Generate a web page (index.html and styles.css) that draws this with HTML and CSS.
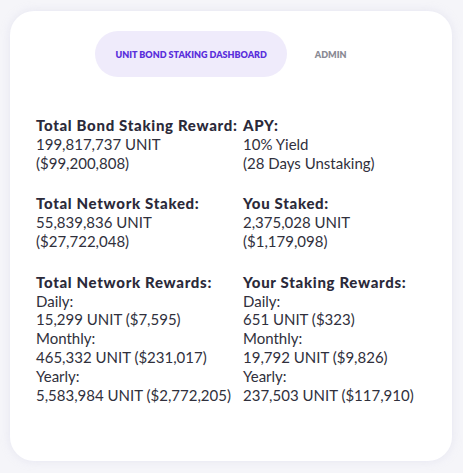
FILE: index.html
```html
<!DOCTYPE html>
<html>
<head>
<meta charset="utf-8">
<link rel="stylesheet" href="styles.css">
</head>
<body>
<div class="card">
  <nav class="tabs">
    <div class="tab tab-active">UNIT BOND STAKING DASHBOARD</div>
    <div class="tab">ADMIN</div>
  </nav>
  <div class="grid">
    <div class="block">
      <div class="label">Total Bond Staking Reward:</div>
      <div>199,817,737 UNIT</div>
      <div>($99,200,808)</div>
    </div>
    <div class="block">
      <div class="label">APY:</div>
      <div>10% Yield</div>
      <div>(28 Days Unstaking)</div>
    </div>
    <div class="block">
      <div class="label">Total Network Staked:</div>
      <div>55,839,836 UNIT</div>
      <div>($27,722,048)</div>
    </div>
    <div class="block">
      <div class="label">You Staked:</div>
      <div>2,375,028 UNIT</div>
      <div>($1,179,098)</div>
    </div>
    <div class="block">
      <div class="label">Total Network Rewards:</div>
      <div>Daily:</div>
      <div>15,299 UNIT ($7,595)</div>
      <div>Monthly:</div>
      <div>465,332 UNIT ($231,017)</div>
      <div>Yearly:</div>
      <div>5,583,984 UNIT ($2,772,205)</div>
    </div>
    <div class="block">
      <div class="label">Your Staking Rewards:</div>
      <div>Daily:</div>
      <div>651 UNIT ($323)</div>
      <div>Monthly:</div>
      <div>19,792 UNIT ($9,826)</div>
      <div>Yearly:</div>
      <div>237,503 UNIT ($117,910)</div>
    </div>
  </div>
</div>
</body>
</html>
```
FILE: styles.css
```css
html, body {
  margin: 0;
  padding: 0;
}
body {
  background: #f5f5f9;
  padding: 11px 11px 12px 10px;
  font-family: "Lato", "Liberation Sans", sans-serif;
  color: #2b2a3a;
  box-sizing: border-box;
  width: 463px;
  height: 473px;
}
.card {
  background: #ffffff;
  border-radius: 24px;
  box-shadow: 0 0 10px rgba(200, 200, 225, 0.35);
  height: 450px;
  box-sizing: border-box;
  padding: 20px 26px 0 26px;
}
.tabs {
  display: flex;
  justify-content: center;
  gap: 8px;
}
.tab {
  height: 46px;
  padding: 0 20px;
  display: flex;
  align-items: center;
  font-size: 9px;
  font-weight: 800;
  color: #8a8a94;
}
.tab-active {
  background: #efebfb;
  color: #5a2fdc;
  border-radius: 23px;
}
.grid {
  margin-top: 39px;
  display: grid;
  grid-template-columns: 207px 1fr;
  row-gap: 22px;
  font-size: 15px;
  line-height: 18.8px;
  color: #30303c;
}
.label {
  font-weight: 900;
  letter-spacing: 0.68px;
  color: #2b2a3a;
}
```
